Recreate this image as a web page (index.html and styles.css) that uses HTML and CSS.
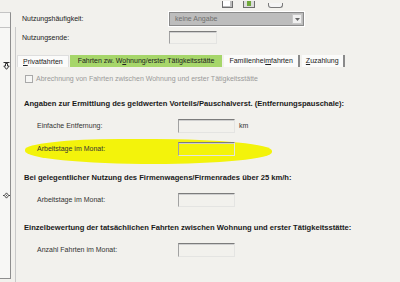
FILE: index.html
```html
<!DOCTYPE html>
<html lang="de">
<head>
	<meta charset="UTF-8">
	<title>Fahrzeug</title>
<link rel="stylesheet" href="styles.css">
</head>
<body>
	<div class="app">
		<div class="side">
			<div class="side-cell"></div>
			<div class="side-icon side-icon-split">
				<svg width="7" height="8" viewBox="0 0 7 8"><path d="M0.5 0.5H6.5M2.5 1.5V4H0.8L3.5 7.3L6.2 4H4.5V1.5Z" fill="none" stroke="#333" stroke-width="1"/></svg>
			</div>
			<div class="side-icon side-icon-move">
				<svg width="8" height="7" viewBox="0 0 8 7"><path d="M4 0.5L6.5 3.5L4 6.5L1.5 3.5ZM0 3.5H1.5M6.5 3.5H8" fill="none" stroke="#333" stroke-width="1"/><rect x="3.5" y="3" width="1" height="1" fill="#333"/></svg>
			</div>
		</div>
		<div class="gutter"></div>

		<div class="main">
			<div class="toolbar">
				<span class="tb tb-doc"></span>
				<span class="tb tb-green"></span>
				<span class="tb tb-win"></span>
			</div>

			<div class="form">
				<div class="form-row">
					<span class="label">Nutzungshäufigkeit:</span>
					<div class="combo">
						<span class="combo-text">keine Angabe</span>
						<span class="combo-btn"><svg width="5" height="3" viewBox="0 0 5 3"><path d="M0 0H5L2.5 3Z" fill="#666"/></svg></span>
					</div>
				</div>
				<div class="form-row">
					<span class="label">Nutzungsende:</span>
					<span class="input input-short"></span>
				</div>
			</div>

			<div class="tabs">
				<span class="tab"><u>P</u>rivatfahrten</span>
				<span class="tab tab-active">Fahrten zw. W<u>o</u>hnung/erster Tätigkeitsstätte</span>
				<span class="tab">Familienhei<u>m</u>fahrten</span>
				<span class="tab tab-last"><u>Z</u>uzahlung</span>
			</div>

			<div class="check-row">
				<span class="checkbox"></span>
				<span class="check-label">Abrechnung von Fahrten zwischen Wohnung und erster Tätigkeitsstätte</span>
			</div>

			<div class="section section-first">
				<h3 class="heading">Angaben zur Ermittlung des geldwerten Vorteils/Pauschalverst. (Entfernungspauschale):</h3>
				<div class="field">
					<span class="field-label">Einfache Entfernung:</span>
					<span class="input"></span>
					<span class="unit">km</span>
				</div>
				<div class="field field-hl">
					<span class="field-label">Arbeitstage im Monat:</span>
					<span class="input"></span>
				</div>
			</div>

			<div class="section">
				<h3 class="heading">Bei gelegentlicher Nutzung des Firmenwagens/Firmenrades über 25 km/h:</h3>
				<div class="field">
					<span class="field-label">Arbeitstage im Monat:</span>
					<span class="input"></span>
				</div>
			</div>

			<div class="section">
				<h3 class="heading">Einzelbewertung der tatsächlichen Fahrten zwischen Wohnung und erster Tätigkeitsstätte:</h3>
				<div class="field">
					<span class="field-label">Anzahl Fahrten im Monat:</span>
					<span class="input"></span>
				</div>
			</div>
		</div>
	</div>
</body>
</html>
```

FILE: styles.css
```css
*{margin: 0; padding: 0; box-sizing: border-box;}
body{
	background: #f2f1ed;
	font-family: "Liberation Sans", Arial, sans-serif;
	font-size: 7px;
	line-height: 10px;
	color: #222;
	width: 400px;
	height: 282px;
	overflow: hidden;
}
.app{display: flex; height: 282px;}

/* linke Leiste */
.side{
	width: 11px;
	height: 267px;
	margin-top: 12px;
	background: #f7f7f5;
	border-top: 1px solid #c4c4c4;
	border-bottom: 1px solid #8e8e8e;
	border-right: 1px solid #8e8e8e;
	display: flex;
	flex-direction: column;
}
.side-cell{height: 15px; border-bottom: 1px solid #c4c4c4;}
.side-icon{display: flex; padding-left: 3px;}
.side-icon svg{display: block;}
.side-icon-split{margin-top: 34px;}
.side-icon-move{margin-top: 122px;}

.gutter{
	width: 5px;
	margin-top: 27px;
	border-right: 1px solid #c9c9c9;
}

.main{flex: 1;}

/* Werkzeugleiste oben (abgeschnitten) */
.toolbar{
	height: 8px;
	margin-bottom: 4px;
	padding-left: 206px;
	display: flex;
	align-items: flex-end;
}
.tb{
	height: 7px;
	border: 1px solid #6d6d6d;
	border-top: none;
	background: #e4e4e4;
	display: block;
}
.tb-doc{width: 11px; background: #fff; box-shadow: inset -2px -1px 0 #bdbdbd;}
.tb-green{width: 12px; margin-left: 10px; background: #dcdcdc; box-shadow: inset 3px 0 0 #dcdcdc, inset -3px -1px 0 #dcdcdc, inset 0 0 0 5px #6fa83a;}
.tb-win{width: 15px; margin-left: 13px; height: 5px; border-radius: 0 0 3px 3px; background: #f4f4f4; border-color: #7a7a7a;}

/* Kopfbereich */
.form{padding-left: 6px;}
.form-row{display: flex; align-items: center; height: 14px;}
.form-row + .form-row{margin-top: 5px; height: 13px;}
.label{width: 147px;}
.combo{
	width: 135px;
	height: 14px;
	background: #bdbdbd;
	border: 1px solid #8a8a8a;
	box-shadow: 0 0 0 1px #fff;
	display: flex;
	align-items: center;
	color: #6f6f6f;
}
.combo-text{flex: 1; padding-left: 5px;}
.combo-btn{
	width: 10px;
	height: 10px;
	margin-right: 1px;
	background: #f0f0f0;
	border: 1px solid #c8c8c8;
	display: flex;
	align-items: center;
	justify-content: center;
}
.combo-btn svg{display: block;}

.input{
	display: block;
	width: 57px;
	height: 14px;
	border: 1px solid;
	border-color: #7c7c7c #e4e4e2 #e4e4e2 #a2a2a2;
	box-shadow: inset 0 1px 0 #cfcfcf;
}
.input-short{width: 48px; height: 13px;}

/* Reiter */
.tabs{
	display: flex;
	height: 12px;
	margin-top: 11px;
	margin-left: 1px;
}
.tab{
	padding: 1px 5px 0 5px;
	background: #fbfbfa;
	border-right: 2px solid #8a8a8a;
	margin-right: 2px;
	white-space: nowrap;
}
.tab:first-child{border: 1px solid #dedede; border-bottom: none; margin-right: 1px; padding-right: 5px;}
.tab-active{background: #a6d66a; border-right: none; padding: 1px 8px 0 8px;}
.tab-last{padding: 1px 4px 0 4px;}
.tab u{text-decoration: underline; text-underline-offset: 1px;}

.check-row{
	display: flex;
	align-items: center;
	margin-top: 7px;
	padding-left: 9px;
	height: 9px;
}
.checkbox{
	width: 8px;
	height: 8px;
	border: 1px solid #a9a9a9;
	background: #f6f6f4;
	margin-right: 3px;
}
.check-label{color: #9a9a9a;}

/* Abschnitte */
.section{padding-left: 8px; margin-top: 17px;}
.section-first{margin-top: 16px;}
.section:last-child{margin-top: 16px;}
.heading{
	font-size: 7.6px;
	line-height: 10px;
	font-weight: bold;
	color: #1a1a1a;
	white-space: nowrap;
}
.field{
	display: flex;
	align-items: center;
	height: 14px;
	margin-top: 9px;
	margin-left: 13px;
	position: relative;
	z-index: 0;
	color: #333;
}
.field:nth-child(2){margin-top: 10px;}
.field-label{width: 141px;}
.unit{margin-left: 4px;}

/* gelbe Markierung */
.field-hl::before{
	content: "";
	position: absolute;
	left: -12px;
	top: -3px;
	width: 247px;
	height: 25px;
	background: #f3f30b;
	border-radius: 40% 50% 50% 55% / 45% 50% 50% 55%;
	z-index: -1;
}
```
